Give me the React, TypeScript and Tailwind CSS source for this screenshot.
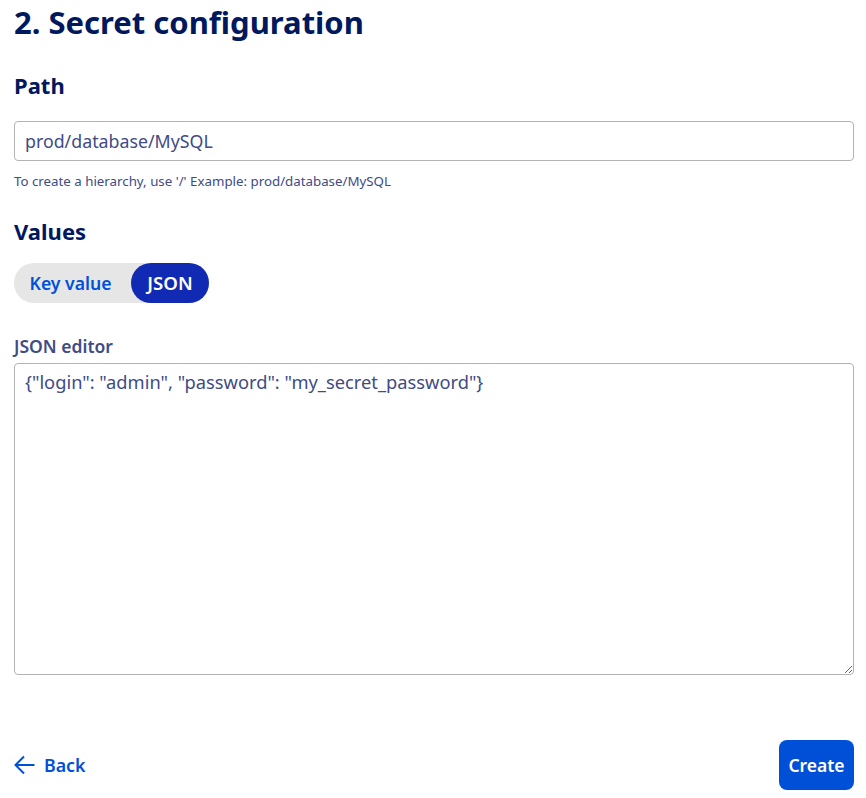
const FONT = "font-['Noto_Sans','Lato',sans-serif]";

function ArrowLeft() {
  return (
    <svg width="21" height="20" viewBox="0 0 21 20" fill="none" stroke="#0050d7" strokeWidth="2" className="shrink-0">
      <path d="M20.5 10H1.5M10 1.5L1.5 10L10 18.5" />
    </svg>
  );
}

export default function App() {
  return (
    <div className={`${FONT} w-[866px] h-[798px] overflow-hidden bg-white pl-[14px] pr-[12px]`}>
      <h1 className="h-[44px] text-[31px] leading-[44px] font-bold text-[#00185e]">2. Secret configuration</h1>

      <h2 className="mt-[25px] h-[32px] text-[22px] leading-[32px] font-bold text-[#00185e]">Path</h2>
      <input
        readOnly
        value="prod/database/MySQL"
        className="mt-[20px] block w-full h-[40px] px-[10px] rounded border border-[#b3b3b3] text-[17.8px] text-[#404b86] outline-none"
      />
      <p className="mt-[10px] h-[20px] text-[13.3px] leading-[20px] text-[#404b86]">
        To create a hierarchy, use '/' Example: prod/database/MySQL
      </p>

      <h2 className="mt-[24px] h-[32px] text-[22px] leading-[32px] font-bold text-[#00185e]">Values</h2>
      <div className="mt-[16px] flex w-[195px] h-[40px] rounded-full bg-[#e6e6e6] text-[17.6px] font-semibold">
        <div className="flex flex-1 items-center justify-center text-[#0050d7] pr-[4px]">Key value</div>
        <div className="flex w-[78px] items-center justify-center rounded-full bg-[#112ab3] text-[18.6px] text-white">JSON</div>
      </div>

      <label className="mt-[31px] block h-[24px] text-[17.5px] leading-[24px] font-semibold text-[#404b86]">JSON editor</label>
      <textarea
        readOnly
        value={'{"login": "admin", "password": "my_secret_password"}'}
        className="mt-[5px] block w-full h-[312px] px-[10px] py-[6px] rounded border border-[#b3b3b3] text-[18.3px] leading-[24px] text-[#404b86] outline-none resize-y"
      />

      <div className="mt-[65px] flex items-center justify-between">
        <a className="flex items-center gap-[9px] text-[17.8px] font-semibold text-[#0050d7]">
          <ArrowLeft />
          Back
        </a>
        <button className="h-[50px] w-[75px] rounded-lg bg-[#0050d7] text-[17.5px] font-semibold text-white">Create</button>
      </div>
    </div>
  );
}
